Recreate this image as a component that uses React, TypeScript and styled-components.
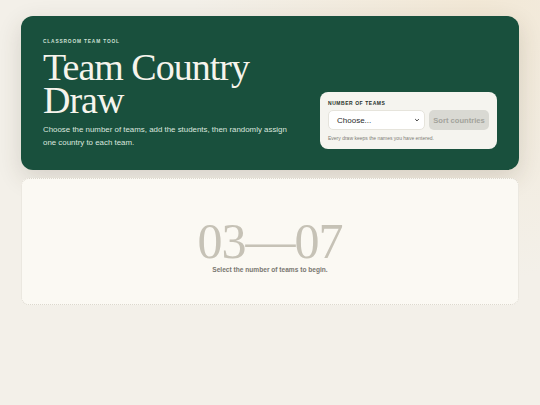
import React from "react";
import styled, { createGlobalStyle } from "styled-components";

const Global = createGlobalStyle`
  html, body { margin: 0; padding: 0; }
  body {
    width: 540px;
    height: 405px;
    overflow: hidden;
    font-family: "Liberation Sans", Arial, sans-serif;
    background:
      radial-gradient(circle at 88% 0%, #f2e8d6 0%, rgba(242,232,214,0) 45%),
      #f3f0e9;
  }
  * { box-sizing: border-box; }
`;

const Page = styled.main`
  padding: 16px 21px;
  display: flex;
  flex-direction: column;
  gap: 8px;
`;

const Hero = styled.section`
  background: #19503d;
  border-radius: 12px;
  padding: 22px 22px 21px 22px;
  display: flex;
  align-items: flex-end;
  justify-content: space-between;
  box-shadow: 0 8px 24px rgba(60, 50, 30, 0.16);
  height: 154px;
`;

const Intro = styled.div`
  display: flex;
  flex-direction: column;
`;

const Eyebrow = styled.div`
  font-size: 4.8px;
  font-weight: 700;
  letter-spacing: 0.85px;
  color: #cfe0d6;
  text-transform: uppercase;
  line-height: 6px;
`;

const Title = styled.h1`
  margin: 3px 0 0 0;
  display: flex;
  flex-direction: column;
  font-family: "Liberation Serif", "Times New Roman", serif;
  font-weight: 400;
  font-size: 38px;
  letter-spacing: -1px;
  color: #f6f4ec;
`;

const TitleLine = styled.span`
  display: block;
  height: 33px;
  line-height: 38px;
`;

const Lede = styled.p`
  margin: 10px 0 0 0;
  font-size: 7.9px;
  line-height: 12.5px;
  color: #dbe6df;
  width: 245px;
`;

const Controls = styled.div`
  background: #f5f4ef;
  border-radius: 8px;
  padding: 8px 8px 7px 8px;
  width: 177px;
  display: flex;
  flex-direction: column;
`;

const Label = styled.label`
  font-size: 5px;
  font-weight: 700;
  letter-spacing: 0.55px;
  color: #26302b;
  text-transform: uppercase;
  line-height: 7px;
`;

const Row = styled.div`
  display: flex;
  gap: 4px;
  margin-top: 3px;
`;

const SelectBox = styled.div`
  flex: 0 0 97px;
  height: 20px;
  background: #ffffff;
  border: 1px solid #e6e4dc;
  border-radius: 5px;
  display: flex;
  align-items: center;
  justify-content: space-between;
  padding: 0 4px 0 8px;
  font-size: 8px;
  color: #2a2a2a;
`;

const Chevron = styled.svg`
  width: 6px;
  height: 6px;
`;

const Button = styled.button`
  flex: 1;
  height: 20px;
  border: none;
  border-radius: 5px;
  background: #d9d9d3;
  color: #a3a39c;
  font-family: "Liberation Sans", Arial, sans-serif;
  font-weight: 700;
  font-size: 7.6px;
  padding: 0;
`;

const Note = styled.div`
  margin-top: 5px;
  font-size: 5px;
  color: #7d7d76;
  line-height: 7px;
`;

const Board = styled.section`
  height: 127px;
  background: #fbf9f3;
  border: 1px dotted #dcd8ce;
  border-radius: 8px;
  display: flex;
  flex-direction: column;
  align-items: center;
  justify-content: center;
  padding-top: 8px;
`;

const Range = styled.div`
  font-family: "Liberation Serif", "Times New Roman", serif;
  font-size: 50px;
  line-height: 46px;
  letter-spacing: -1px;
  color: #c6c2b6;
`;

const Hint = styled.div`
  margin-top: 2px;
  font-size: 6.6px;
  line-height: 8px;
  font-weight: 700;
  color: #797770;
`;

export default function App() {
  return (
    <>
      <Global />
      <Page>
        <Hero>
          <Intro>
            <Eyebrow>Classroom team tool</Eyebrow>
            <Title>
              <TitleLine>Team Country</TitleLine>
              <TitleLine>Draw</TitleLine>
            </Title>
            <Lede>
              Choose the number of teams, add the students, then randomly assign one
              country to each team.
            </Lede>
          </Intro>
          <Controls>
            <Label>Number of teams</Label>
            <Row>
              <SelectBox>
                <span>Choose...</span>
                <Chevron viewBox="0 0 10 10">
                  <path d="M2 3.5 L5 6.5 L8 3.5" fill="none" stroke="#333" strokeWidth="1.6" />
                </Chevron>
              </SelectBox>
              <Button>Sort countries</Button>
            </Row>
            <Note>Every draw keeps the names you have entered.</Note>
          </Controls>
        </Hero>
        <Board>
          <Range>03—07</Range>
          <Hint>Select the number of teams to begin.</Hint>
        </Board>
      </Page>
    </>
  );
}
